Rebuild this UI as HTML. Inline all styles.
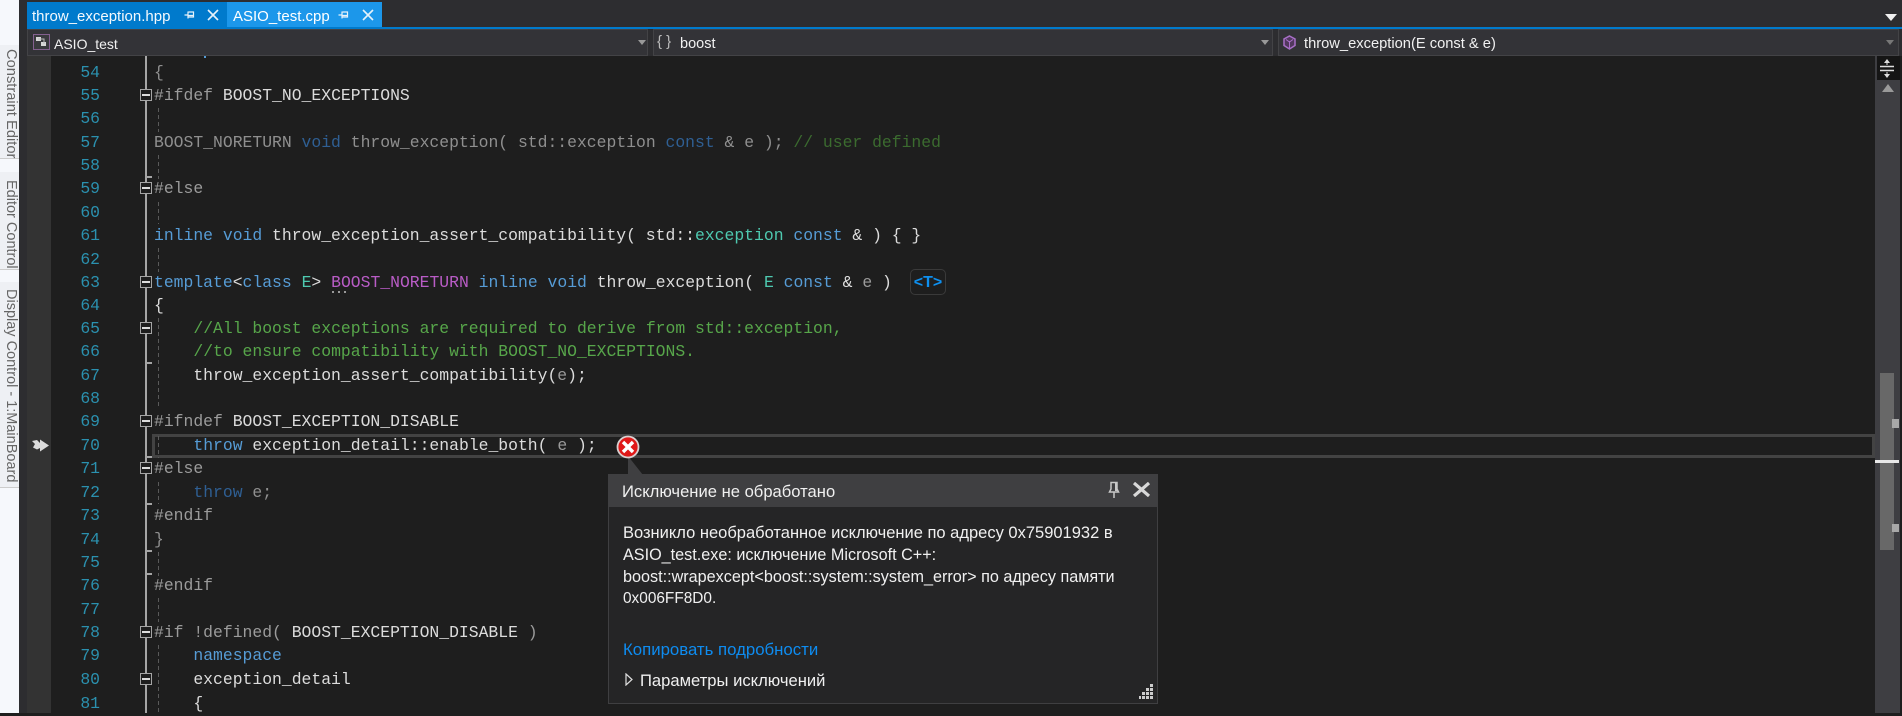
<!DOCTYPE html>
<html><head><meta charset="utf-8"><style>
html,body{margin:0;padding:0;width:1902px;height:713px;overflow:hidden;background:#1e1e1e}
div,svg,span.a{box-sizing:border-box}
.a{position:absolute}
.ui{font-family:"Liberation Sans",sans-serif;white-space:nowrap}
.n{position:absolute;left:60px;width:40px;text-align:right;color:#2b91af;font:16.4px/24px "Liberation Mono",monospace;height:24px;margin-top:1px}
.c{position:absolute;left:154px;font:16.4px/24px "Liberation Mono",monospace;height:24px;white-space:pre;color:#dcdcdc;margin-top:1px}
.k{color:#569cd6}.kd{color:#2f5f93}.g{color:#9b9b9b}.d{color:#8f8f8f}.t{color:#4ec9b0}.m{color:#57a64a}.md{color:#3b6b2f}.p{color:#9a9a9a}.w{color:#dcdcdc}.mac{color:#b95cc6}
.box{position:absolute;left:140px;width:12px;height:12px;background:#1e1e1e;border:1.5px solid #a5a5a5}
.box:after{content:"";position:absolute;left:1px;right:1px;top:4px;height:1.5px;background:#dcdcdc}
.tick{position:absolute;left:146px;width:6px;height:2px;background:#a5a5a5}
.ind{position:absolute;left:158px;width:1px;background:repeating-linear-gradient(#5a5a5a 0 4px,transparent 4px 7px)}
.pop{position:absolute;font-family:"Liberation Sans",sans-serif;font-size:16.3px;line-height:22px;height:22px;white-space:nowrap;color:#f0f0f0}
</style></head><body>
<!-- left tool sidebar -->
<div class="a" style="left:0;top:0;width:19px;height:713px;background:#f6f8fc"></div>
<div class="a" style="left:0;top:45px;width:19px;height:114px;background:#eef0f4;border-bottom:1px solid #ccc"></div>
<div class="a" style="left:0;top:172px;width:19px;height:98px;background:#eef0f4;border-bottom:1px solid #ccc"></div>
<div class="a" style="left:0;top:282px;width:19px;height:206px;background:#eef0f4;border-bottom:1px solid #ccc"></div>
<div class="a ui" style="left:0;top:49px;width:19px;line-height:17px;writing-mode:vertical-rl;font-size:14.7px;color:#666">Constraint Editor</div>
<div class="a ui" style="left:0;top:180px;width:19px;line-height:17px;writing-mode:vertical-rl;font-size:14.5px;color:#666">Editor Control</div>
<div class="a ui" style="left:0;top:289px;width:19px;line-height:17px;writing-mode:vertical-rl;font-size:14.5px;color:#666">Display Control - 1:MainBoard</div>
<!-- chrome -->
<div class="a" style="left:19px;top:0;width:1883px;height:713px;background:#2d2d30"></div>
<div class="a" style="left:27px;top:27px;width:1875px;height:2px;background:#007acc"></div>
<!-- tabs -->
<div class="a" style="left:27px;top:2px;width:200px;height:25px;background:#007acc"></div>
<div class="a" style="left:227px;top:2px;width:155px;height:25px;background:#1c97ea"></div>
<div class="a ui" style="left:32px;top:5px;line-height:24px;font-size:15px;color:#f4f9fd">throw_exception.hpp</div>
<div class="a ui" style="left:233px;top:5px;line-height:24px;font-size:15px;color:#fff">ASIO_test.cpp</div>
<svg class="a" style="left:184px;top:9px" width="12" height="12" viewBox="0 0 12 12"><path d="M0.5 6H4M4 2.5V9.500M4.500 3H9.500V8H4.500M4.500 6.500H9.500" fill="none" stroke="#e6f2fa" stroke-width="1.200"/></svg>
<svg class="a" style="left:207px;top:9px" width="12" height="12" viewBox="0 0 12 12"><path d="M1 1L11 11M11 1L1 11" stroke="#e6f2fa" stroke-width="1.600"/></svg>
<svg class="a" style="left:338px;top:9px" width="12" height="12" viewBox="0 0 12 12"><path d="M0.5 6H4M4 2.5V9.500M4.500 3H9.500V8H4.500M4.500 6.500H9.500" fill="none" stroke="#e6f2fa" stroke-width="1.200"/></svg>
<svg class="a" style="left:362px;top:9px" width="12" height="12" viewBox="0 0 12 12"><path d="M1 1L11 11M11 1L1 11" stroke="#e6f2fa" stroke-width="1.600"/></svg>
<svg class="a" style="left:1885px;top:14px" width="12" height="7" viewBox="0 0 12 7"><path d="M0 0H12L6 7Z" fill="#f0f0f0"/></svg>
<!-- nav bar -->
<div class="a" style="left:27px;top:29px;width:621px;height:27px;background:#333337;border:1px solid #434346"></div>
<div class="a" style="left:653px;top:29px;width:620px;height:27px;background:#333337;border:1px solid #434346"></div>
<div class="a" style="left:1278px;top:29px;width:621px;height:27px;background:#333337;border:1px solid #434346"></div>
<svg class="a" style="left:33px;top:34px" width="17" height="16" viewBox="0 0 17 16"><rect x="0.500" y="0.500" width="16" height="15" fill="#3a3a3e" stroke="#84608f"/><path d="M3 3H8V7H3ZM8 8H13V12H8Z" fill="#d8d8d8"/><path d="M5 5H11V10" stroke="#bbb" fill="none"/></svg>
<div class="a ui" style="left:54px;top:31px;line-height:26px;font-size:14px;color:#f1f1f1">ASIO_test</div>
<div class="a" style="left:638px;top:40px;border-left:4px solid transparent;border-right:4px solid transparent;border-top:5px solid #999"></div>
<div class="a ui" style="left:657px;top:29px;line-height:26px;font-size:15px;color:#bbb">{ }</div>
<div class="a ui" style="left:680px;top:31px;line-height:26px;font-size:14.5px;color:#f1f1f1">boost</div>
<div class="a" style="left:1261px;top:40px;border-left:4px solid transparent;border-right:4px solid transparent;border-top:5px solid #999"></div>
<svg class="a" style="left:1283px;top:35px" width="13" height="15" viewBox="0 0 13 15"><path d="M6.500 1L12 4V10.500L6.500 14L1 10.500V4Z" fill="#52385e" stroke="#a96fc8" stroke-width="1.500"/><path d="M6.500 6V13M3 4.500L6.500 7L10 4.500" stroke="#a96fc8" fill="none"/></svg>
<div class="a ui" style="left:1304px;top:31px;line-height:26px;font-size:14.7px;color:#f1f1f1">throw_exception(E const &amp; e)</div>
<div class="a" style="left:1886px;top:40px;border-left:4px solid transparent;border-right:4px solid transparent;border-top:5px solid #777"></div>
<!-- editor -->
<div class="a" style="left:27px;top:56px;width:1875px;height:657px;background:#1e1e1e"></div>
<div class="a" style="left:27px;top:56px;width:24px;height:657px;background:#333"></div>
<!-- right scrollbar -->
<div class="a" style="left:1875px;top:56px;width:25px;height:657px;background:#3e3e42"></div>
<div class="a" style="left:1877px;top:56px;width:23px;height:24px;background:#151515"></div>
<svg class="a" style="left:1880px;top:58px" width="16" height="21" viewBox="0 0 16 21"><path d="M0 8.500H14M0 12.500H14" stroke="#ddd" stroke-width="1.500"/><path d="M7 1L10 5H4ZM7 20L10 16H4Z" fill="#ddd"/><path d="M7 4V7M7 14V17" stroke="#ddd"/></svg>
<div class="a" style="left:1882px;top:84px;border-left:6px solid transparent;border-right:6px solid transparent;border-bottom:8px solid #999"></div>
<div class="a" style="left:1880px;top:373px;width:14px;height:177px;background:#686868"></div>
<div class="a" style="left:1892px;top:419px;width:7px;height:9px;background:#a8a8a8"></div>
<div class="a" style="left:1892px;top:524px;width:7px;height:8px;background:#a8a8a8"></div>
<div class="a" style="left:1875px;top:460px;width:24px;height:3px;background:#e8e8e8"></div>
<!-- current line -->
<div class="a" style="left:152px;top:434px;width:1723px;height:24px;border:3px solid #434343"></div>
<!-- fold -->
<div class="a" style="left:145px;top:56px;width:2px;height:657px;background:#a5a5a5"></div>
<div class="tick" style="top:176px"></div><div class="tick" style="top:362px"></div><div class="tick" style="top:456px"></div><div class="tick" style="top:503px"></div><div class="tick" style="top:550px"></div><div class="tick" style="top:573px"></div>
<div class="box" style="top:89px"></div><div class="box" style="top:182px"></div><div class="box" style="top:276px"></div><div class="box" style="top:322px"></div><div class="box" style="top:415px"></div><div class="box" style="top:462px"></div><div class="box" style="top:626px"></div><div class="box" style="top:673px"></div>
<div class="ind" style="top:108px;height:24px"></div><div class="ind" style="top:155px;height:24px"></div><div class="ind" style="top:202px;height:22px"></div><div class="ind" style="top:248px;height:24px"></div><div class="ind" style="top:318px;height:90px"></div><div class="ind" style="top:436px;height:22px"></div><div class="ind" style="top:482px;height:22px"></div><div class="ind" style="top:552px;height:24px"></div><div class="ind" style="top:598px;height:24px"></div><div class="ind" style="top:645px;height:68px"></div>
<div class="a" style="left:204px;top:56px;width:2px;height:2px;background:#569cd6"></div>
<!-- execution arrow -->
<svg class="a" style="left:32px;top:439px" width="17" height="13" viewBox="0 0 17 13"><path d="M0 2L5 1L8 4V0.500L17 6.500L8 12.500V9L5 10.500L1 8.500L3 5Z" fill="#dcdcdc"/></svg>
<!-- line numbers -->
<div class="n" style="top:60px">54</div><div class="n" style="top:83px">55</div><div class="n" style="top:106px">56</div><div class="n" style="top:130px">57</div><div class="n" style="top:153px">58</div><div class="n" style="top:176px">59</div><div class="n" style="top:200px">60</div><div class="n" style="top:223px">61</div><div class="n" style="top:247px">62</div><div class="n" style="top:270px">63</div><div class="n" style="top:293px">64</div><div class="n" style="top:316px">65</div><div class="n" style="top:339px">66</div><div class="n" style="top:363px">67</div><div class="n" style="top:386px">68</div><div class="n" style="top:409px">69</div><div class="n" style="top:433px">70</div><div class="n" style="top:456px">71</div><div class="n" style="top:480px">72</div><div class="n" style="top:503px">73</div><div class="n" style="top:527px">74</div><div class="n" style="top:550px">75</div><div class="n" style="top:573px">76</div><div class="n" style="top:597px">77</div><div class="n" style="top:620px">78</div><div class="n" style="top:643px">79</div><div class="n" style="top:667px">80</div><div class="n" style="top:691px">81</div>
<!-- code -->
<div class="c" style="top:60px"><span class="d">{</span></div>
<div class="c" style="top:83px"><span class="g">#ifdef</span> BOOST_NO_EXCEPTIONS</div>
<div class="c" style="top:130px"><span class="d">BOOST_NORETURN </span><span class="kd">void</span><span class="d"> throw_exception( std::exception </span><span class="kd">const</span><span class="d"> &amp; e ); </span><span class="md">// user defined</span></div>
<div class="c" style="top:176px"><span class="g">#else</span></div>
<div class="c" style="top:223px"><span class="k">inline void</span> throw_exception_assert_compatibility( std::<span class="t">exception</span> <span class="k">const</span> &amp; ) { }</div>
<div class="c" style="top:270px"><span class="k">template</span><span class="w">&lt;</span><span class="k">class</span> <span class="t">E</span>&gt; <span class="mac">BOOST_NORETURN</span> <span class="k">inline void</span> throw_exception( <span class="t">E</span> <span class="k">const</span> &amp; <span class="p">e</span> )</div>
<div class="c" style="top:293px">{</div>
<div class="c" style="top:316px">    <span class="m">//All boost exceptions are required to derive from std::exception,</span></div>
<div class="c" style="top:339px">    <span class="m">//to ensure compatibility with BOOST_NO_EXCEPTIONS.</span></div>
<div class="c" style="top:363px">    throw_exception_assert_compatibility(<span class="p">e</span>);</div>
<div class="c" style="top:409px"><span class="g">#ifndef</span> BOOST_EXCEPTION_DISABLE</div>
<div class="c" style="top:433px">    <span class="k">throw</span> exception_detail::enable_both( <span class="p">e</span> );</div>
<div class="c" style="top:456px"><span class="g">#else</span></div>
<div class="c" style="top:480px">    <span class="kd">throw</span><span class="d"> e;</span></div>
<div class="c" style="top:503px"><span class="g">#endif</span></div>
<div class="c" style="top:527px"><span class="d">}</span></div>
<div class="c" style="top:573px"><span class="g">#endif</span></div>
<div class="c" style="top:620px"><span class="g">#if !defined(</span> BOOST_EXCEPTION_DISABLE <span class="g">)</span></div>
<div class="c" style="top:643px">    <span class="k">namespace</span></div>
<div class="c" style="top:667px">    exception_detail</div>
<div class="c" style="top:691px">    {</div>
<div class="a" style="left:332px;top:291px;width:15px;height:2px;background:repeating-linear-gradient(90deg,#999 0 2px,transparent 2px 6px)"></div>
<!-- T hint -->
<div class="a ui" style="left:910px;top:269px;width:36px;height:26px;border:1px solid #3a3a3a;border-radius:5px;text-align:center;line-height:25px;font-size:16px;font-weight:bold;color:#0e90f0">&lt;T&gt;</div>
<!-- popup -->
<svg class="a" style="left:610px;top:434px" width="36" height="42" viewBox="0 0 36 42"><path d="M18 22V41H33Z" fill="#3f3f41"/><circle cx="18" cy="13" r="10.500" fill="#e01818" stroke="#d9d0d0" stroke-width="1.800"/><path d="M13 8L23 18M23 8L13 18" stroke="#fff" stroke-width="3.400"/></svg>
<div class="a" style="left:608px;top:474px;width:550px;height:230px;background:#252526;border:1px solid #3f3f41"></div>
<div class="a" style="left:609px;top:474px;width:548px;height:33px;background:#3f3f41"></div>
<div class="pop" style="left:622px;top:481px;font-size:16.6px">Исключение не обработано</div>
<svg class="a" style="left:1108px;top:481px" width="12" height="18" viewBox="0 0 12 18"><path d="M3 1.500H9V8L10.500 11H1.500L3 8ZM6 11V17" fill="none" stroke="#c8c8c8" stroke-width="1.500"/><path d="M7 2H9V10H7Z" fill="#c8c8c8"/></svg>
<svg class="a" style="left:1133px;top:482px" width="17" height="15" viewBox="0 0 17 15"><path d="M1 1L16 14M16 1L1 14" stroke="#d8d8d8" stroke-width="3.200"/></svg>
<div class="pop" style="left:623px;top:522px;font-size:16.5px">Возникло необработанное исключение по адресу 0x75901932 в</div>
<div class="pop" style="left:623px;top:544px;font-size:16.2px">ASIO_test.exe: исключение Microsoft C++:</div>
<div class="pop" style="left:623px;top:566px;font-size:16.2px">boost::wrapexcept&lt;boost::system::system_error&gt; по адресу памяти</div>
<div class="pop" style="left:623px;top:588px;font-size:15.4px">0x006FF8D0.</div>
<div class="pop" style="left:623px;top:639px;font-size:16.8px;color:#0e8cf0">Копировать подробности</div>
<svg class="a" style="left:625px;top:673px" width="8" height="13" viewBox="0 0 8 13"><path d="M1 1L7 6.500L1 12Z" fill="none" stroke="#ddd" stroke-width="1.200"/></svg>
<div class="pop" style="left:640px;top:670px;font-size:16.6px">Параметры исключений</div>
<div class="a" style="left:1139px;top:684px;width:14px;height:16px;background:
linear-gradient(#ccc,#ccc) 11px 0/3px 3px no-repeat,
linear-gradient(#ccc,#ccc) 11px 4px/3px 3px no-repeat,linear-gradient(#ccc,#ccc) 7px 4px/3px 3px no-repeat,
linear-gradient(#ccc,#ccc) 11px 8px/3px 3px no-repeat,linear-gradient(#ccc,#ccc) 7px 8px/3px 3px no-repeat,linear-gradient(#ccc,#ccc) 3px 8px/3px 3px no-repeat,
linear-gradient(#ccc,#ccc) 11px 12px/3px 3px no-repeat,linear-gradient(#ccc,#ccc) 7px 12px/3px 3px no-repeat,linear-gradient(#ccc,#ccc) 3px 12px/3px 3px no-repeat,linear-gradient(#ccc,#ccc) 0 12px/2px 3px no-repeat"></div>
</body></html>
